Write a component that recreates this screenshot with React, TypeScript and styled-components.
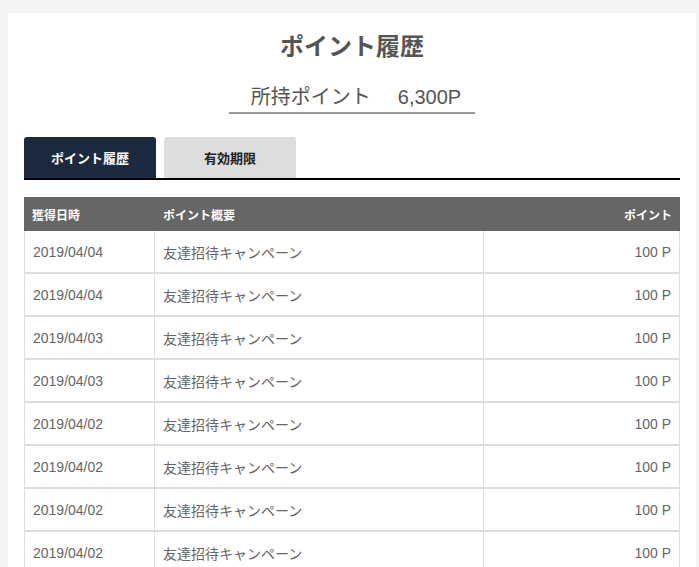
import styled, { createGlobalStyle } from "styled-components";

const GlobalStyle = createGlobalStyle`
  html, body {
    margin: 0;
    padding: 0;
    background: #f4f4f4;
    font-family: "Liberation Sans", "Noto Sans CJK JP", sans-serif;
  }
`;

const Page = styled.div`
  padding: 13px 3px 0 8px;
  height: 567px;
  overflow: hidden;
  box-sizing: border-box;
`;

const Card = styled.main`
  background: #fff;
  padding: 20px 16px 40px 16px;
  min-height: 600px;
`;

const Title = styled.h1`
  margin: 0;
  text-align: center;
  font-size: 24px;
  line-height: 28px;
  font-weight: bold;
  color: #555;
`;

const BalanceRow = styled.div`
  margin-top: 23px;
  text-align: center;
`;

const Balance = styled.div`
  display: inline-block;
  padding: 0 14px 2px 22px;
  border-bottom: 2px solid #999;
  font-size: 20px;
  line-height: 26px;
  color: #555;
`;

const BalanceValue = styled.span`
  margin-left: 27px;
`;

const Tabs = styled.div`
  display: flex;
  gap: 8px;
  margin-top: 23px;
  border-bottom: 2px solid #000;
`;

const Tab = styled.button<{ $active?: boolean }>`
  width: 132px;
  height: 41px;
  border: none;
  border-radius: 3px 3px 0 0;
  background: ${(p) => (p.$active ? "#1b2a3f" : "#dddddd")};
  color: ${(p) => (p.$active ? "#fff" : "#222")};
  font-family: inherit;
  font-size: 13px;
  font-weight: bold;
  padding: 0;
  cursor: pointer;
`;

const Table = styled.table`
  width: 100%;
  margin-top: 17px;
  border-collapse: separate;
  border-spacing: 0;
  table-layout: fixed;
`;

const Col = styled.col<{ $width?: string }>`
  width: ${(p) => p.$width || "auto"};
`;

const HeadCell = styled.th<{ $align?: string }>`
  height: 34px;
  padding: 0 8px;
  background: #666;
  color: #fff;
  font-size: 12px;
  font-weight: bold;
  text-align: ${(p) => p.$align || "left"};
`;

const Cell = styled.td<{ $align?: string }>`
  height: 41px;
  padding: 0 8px;
  border-bottom: 2px solid #ddd;
  border-right: 1px solid #ddd;
  color: #666;
  font-size: 14px;
  text-align: ${(p) => p.$align || "left"};

  &:first-child {
    border-left: 1px solid #ddd;
  }
`;

const rows = [
  "2019/04/04",
  "2019/04/04",
  "2019/04/03",
  "2019/04/03",
  "2019/04/02",
  "2019/04/02",
  "2019/04/02",
  "2019/04/02",
  "2019/04/02",
];

export default function App() {
  return (
    <>
      <GlobalStyle />
      <Page>
        <Card>
          <Title>ポイント履歴</Title>
          <BalanceRow>
            <Balance>
              所持ポイント<BalanceValue>6,300P</BalanceValue>
            </Balance>
          </BalanceRow>
          <Tabs>
            <Tab $active>ポイント履歴</Tab>
            <Tab>有効期限</Tab>
          </Tabs>
          <Table>
            <colgroup>
              <Col $width="131px" />
              <Col $width="329px" />
              <Col />
            </colgroup>
            <thead>
              <tr>
                <HeadCell>獲得日時</HeadCell>
                <HeadCell>ポイント概要</HeadCell>
                <HeadCell $align="right">ポイント</HeadCell>
              </tr>
            </thead>
            <tbody>
              {rows.map((date, i) => (
                <tr key={i}>
                  <Cell>{date}</Cell>
                  <Cell>友達招待キャンペーン</Cell>
                  <Cell $align="right">100 P</Cell>
                </tr>
              ))}
            </tbody>
          </Table>
        </Card>
      </Page>
    </>
  );
}
